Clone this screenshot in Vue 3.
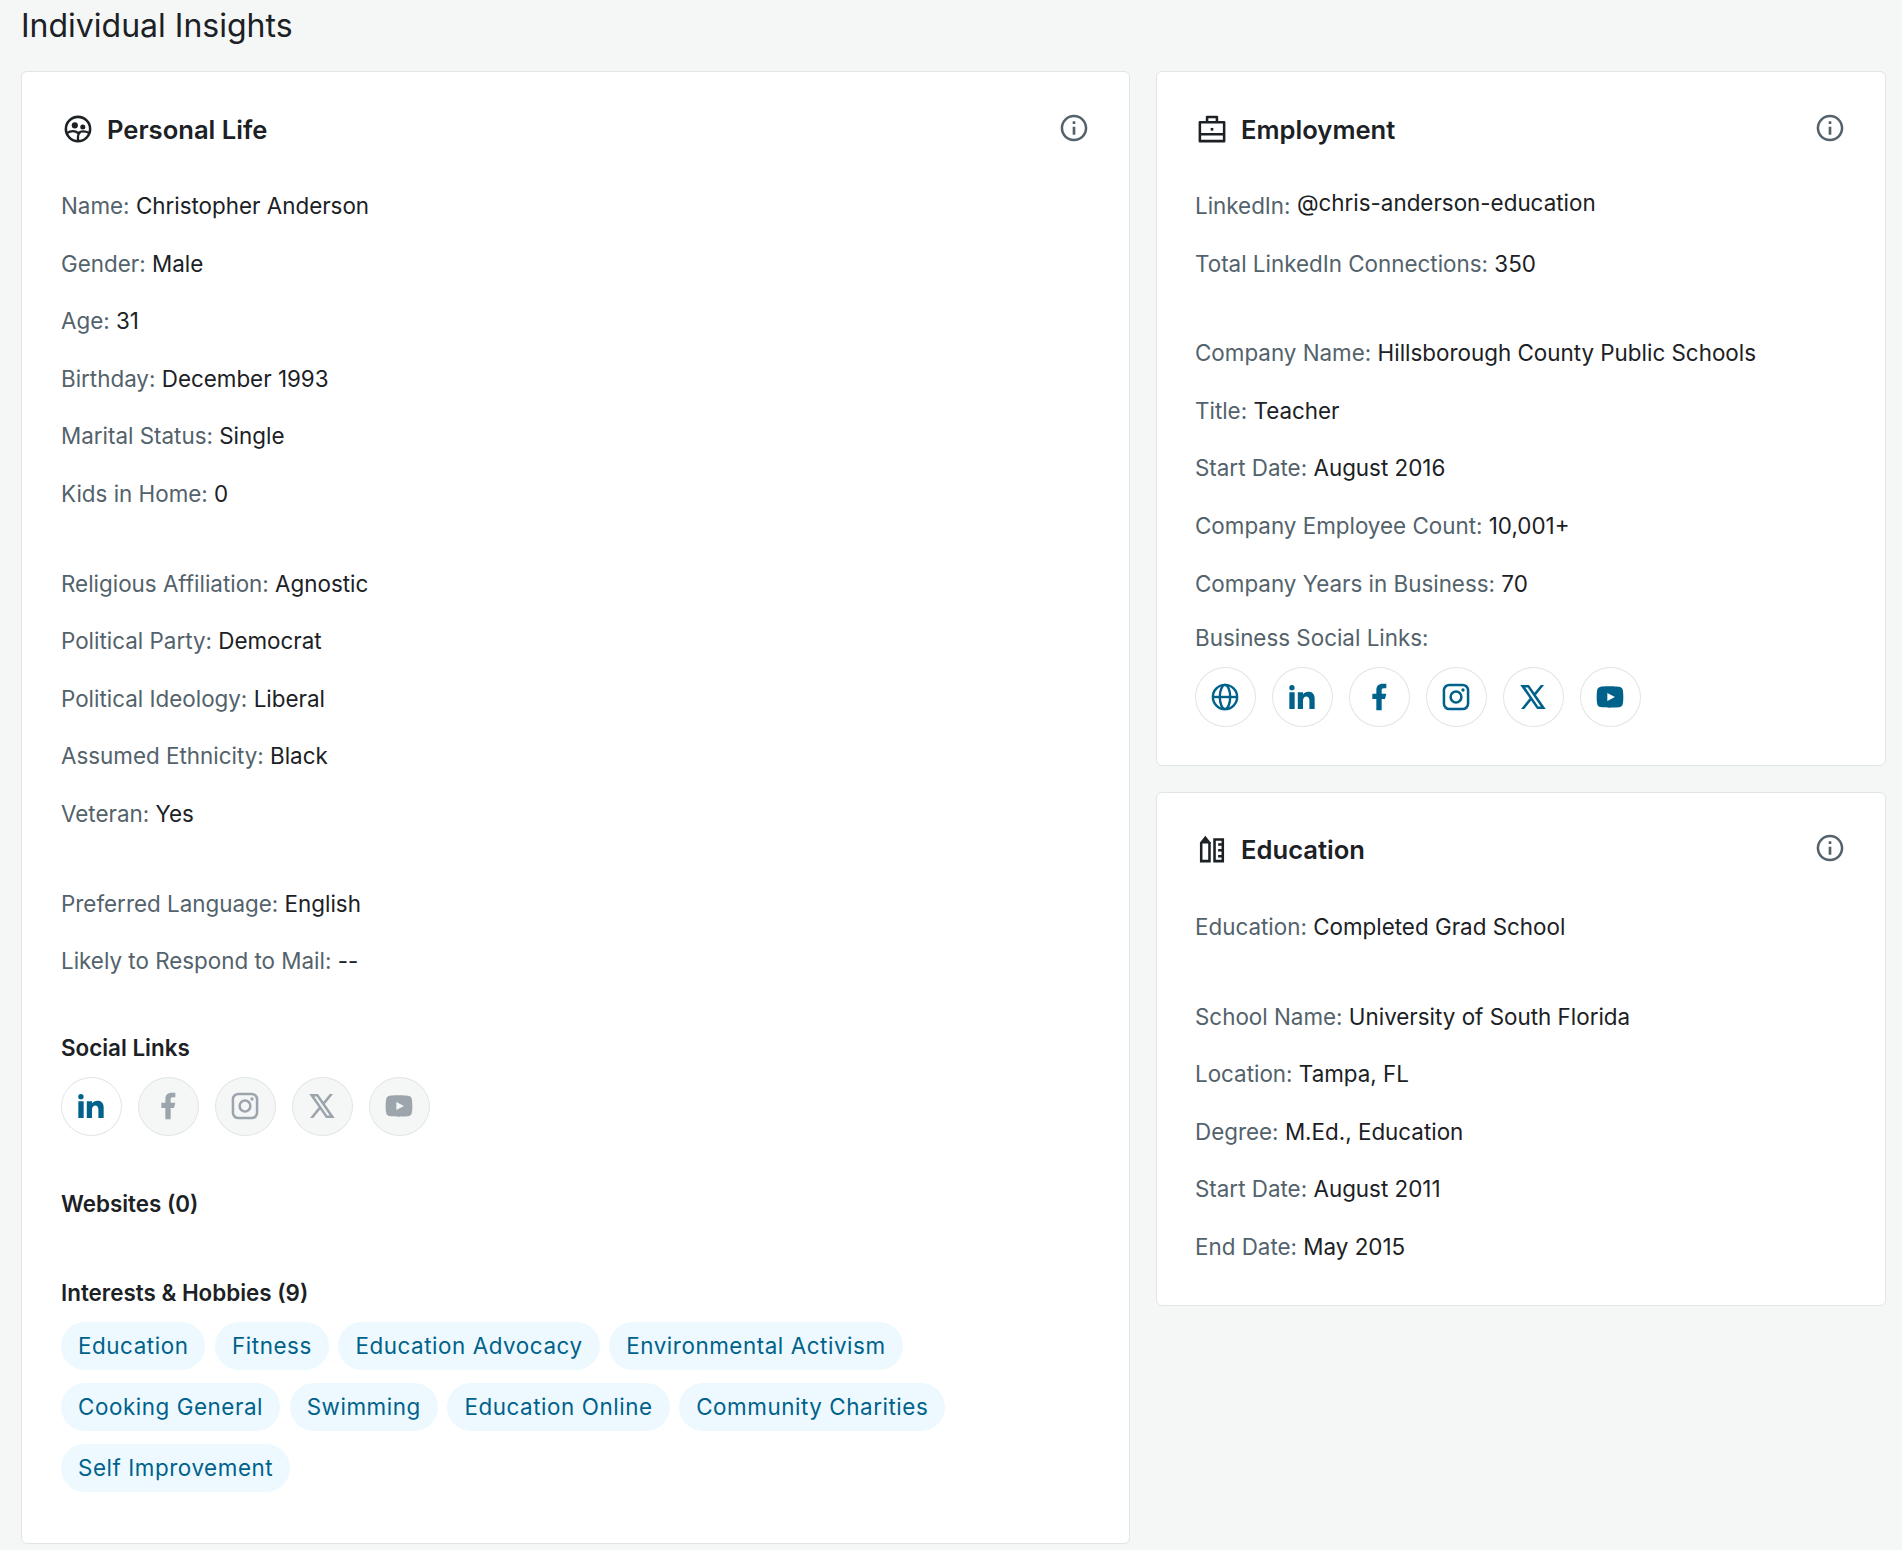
<script setup>
const personalGroups = [
  [
    { label: 'Name', value: 'Christopher Anderson' },
    { label: 'Gender', value: 'Male' },
    { label: 'Age', value: '31' },
    { label: 'Birthday', value: 'December 1993' },
    { label: 'Marital Status', value: 'Single' },
    { label: 'Kids in Home', value: '0' },
  ],
  [
    { label: 'Religious Affiliation', value: 'Agnostic' },
    { label: 'Political Party', value: 'Democrat' },
    { label: 'Political Ideology', value: 'Liberal' },
    { label: 'Assumed Ethnicity', value: 'Black' },
    { label: 'Veteran', value: 'Yes' },
  ],
  [
    { label: 'Preferred Language', value: 'English' },
    { label: 'Likely to Respond to Mail', value: '--' },
  ],
];

const employmentGroups = [
  [
    { label: 'LinkedIn', value: '@chris-anderson-education', link: true },
    { label: 'Total LinkedIn Connections', value: '350' },
  ],
  [
    { label: 'Company Name', value: 'Hillsborough County Public Schools' },
    { label: 'Title', value: 'Teacher' },
    { label: 'Start Date', value: 'August 2016' },
    { label: 'Company Employee Count', value: '10,001+' },
    { label: 'Company Years in Business', value: '70' },
  ],
];

const educationGroups = [
  [{ label: 'Education', value: 'Completed Grad School' }],
  [
    { label: 'School Name', value: 'University of South Florida' },
    { label: 'Location', value: 'Tampa, FL' },
    { label: 'Degree', value: 'M.Ed., Education' },
    { label: 'Start Date', value: 'August 2011' },
    { label: 'End Date', value: 'May 2015' },
  ],
];

const infoIcon =
  'M11 7h2v2h-2zm0 4h2v6h-2zm1-9C6.48 2 2 6.48 2 12s4.48 10 10 10 10-4.48 10-10S17.52 2 12 2zm0 18.1c-4.47 0-8.1-3.63-8.1-8.1S7.53 3.900 12 3.900s8.100 3.630 8.100 8.100-3.630 8.100-8.100 8.100z';

const icons = {
  linkedin:
    'M6.44 5a2 2 0 1 1-4-.002 2 2 0 0 1 4 .002zM6.500 8.480h-4V21h4V8.480zm6.320 0H8.840V21h3.940v-6.570c0-3.660 4.770-4 4.770 0V21h3.950v-7.930c0-6.170-7.060-5.940-8.720-2.910l.04-1.680z',
  facebook:
    'M14 13.5h2.5l1-4H14v-2c0-1.03 0-2 2-2h1.5V2.14c-.326-.043-1.557-.14-2.857-.14C11.928 2 10 3.657 10 6.7v2.8H7v4h3V22h4v-8.5z',
  instagram:
    'M7 2h10a5 5 0 0 1 5 5v10a5 5 0 0 1-5 5H7a5 5 0 0 1-5-5V7a5 5 0 0 1 5-5zm0 1.900A3.100 3.100 0 0 0 3.900 7v10A3.100 3.100 0 0 0 7 20.100h10a3.100 3.100 0 0 0 3.100-3.100V7A3.100 3.100 0 0 0 17 3.900zM12 7a5 5 0 1 1 0 10 5 5 0 0 1 0-10zm0 1.900a3.100 3.100 0 1 0 0 6.200 3.100 3.100 0 0 0 0-6.200zM17.250 5.500a1.250 1.250 0 1 1 0 2.500 1.250 1.250 0 0 1 0-2.500z',
  x: 'M10.600 14.650 15.030 21h6.520l-7.320-10.480L20.320 3h-2.470l-4.770 5.890L8.970 3H2.450l7 10.015L2.980 21h2.470zM15.960 19.200 6.180 4.800h1.860l9.780 14.400z',
  youtube:
    'M12.244 4c.534.003 1.87.016 3.29.073l.504.022c1.429.067 2.857.183 3.566.38.945.266 1.687 1.04 1.938 2.022.4 1.56.45 4.602.456 5.339l.001.152v.174c-.007.737-.057 3.78-.457 5.339-.254.985-.997 1.76-1.938 2.022-.709.197-2.137.313-3.566.38l-.504.023c-1.42.056-2.756.07-3.29.072l-.235.001h-.255c-1.13-.007-5.856-.058-7.36-.476-.944-.266-1.687-1.04-1.938-2.022-.4-1.56-.45-4.602-.456-5.339v-.326c.006-.737.056-3.78.456-5.339.254-.985.997-1.76 1.939-2.021 1.503-.419 6.23-.47 7.36-.476zM10 9v6l5.700-3z',
};

const socialLinks = [
  { name: 'linkedin', active: true },
  { name: 'facebook', active: false },
  { name: 'instagram', active: false },
  { name: 'x', active: false },
  { name: 'youtube', active: false },
];

const businessLinks = ['web', 'linkedin', 'facebook', 'instagram', 'x', 'youtube'];

const interests = [
  'Education',
  'Fitness',
  'Education Advocacy',
  'Environmental Activism',
  'Cooking General',
  'Swimming',
  'Education Online',
  'Community Charities',
  'Self Improvement',
];
</script>

<template>
  <main class="page">
    <h1 class="page-title">Individual Insights</h1>
    <div class="columns">
      <section class="card card-personal">
        <header class="card-header">
          <svg class="icon" viewBox="0 0 24 24" fill="none" stroke="currentColor" stroke-width="1.9">
            <circle cx="12" cy="12" r="9.1" />
            <path d="M3.4 15.2c3.2-1.9 6.1-2.2 8.7-.2 2.4-1.6 5.4-1.5 8.3 0M12 21v-3.5c0-1.4.6-2.2 1.6-2.8" stroke-width="1.7" />
            <circle cx="9.6" cy="9.3" r="2.3" fill="currentColor" stroke="none" />
            <circle cx="15.6" cy="10.5" r="1.9" fill="currentColor" stroke="none" />
          </svg>
          <h2>Personal Life</h2>
          <svg class="icon info" viewBox="0 0 24 24"><path fill="currentColor" :d="infoIcon" /></svg>
        </header>
        <div v-for="(group, i) in personalGroups" :key="i" class="group">
          <p v-for="row in group" :key="row.label" class="row">
            <span class="label">{{ row.label }}:</span> <span>{{ row.value }}</span>
          </p>
        </div>
        <h3 class="section-title social-title">Social Links</h3>
        <div class="socials">
          <a v-for="s in socialLinks" :key="s.name" class="social" :class="{ disabled: !s.active }">
            <svg class="icon" viewBox="0 0 24 24"><path fill="currentColor" fill-rule="evenodd" :d="icons[s.name]" /></svg>
          </a>
        </div>
        <h3 class="section-title websites">Websites (0)</h3>
        <h3 class="section-title">Interests &amp; Hobbies (9)</h3>
        <div class="chips">
          <span v-for="name in interests" :key="name" class="chip">{{ name }}</span>
        </div>
      </section>

      <div class="side">
        <section class="card card-employment">
          <header class="card-header">
            <svg class="icon" viewBox="0 0 24 24" fill="none" stroke="currentColor" stroke-width="1.9">
              <path d="M2.9 6.9h18.2v14.2H2.9zM8.3 6.9V3h7.4v3.900M2.900 15.900h18.200" stroke-linejoin="round" />
              <path d="M11 11.200h2v2h-2z" fill="currentColor" stroke="none" />
            </svg>
            <h2>Employment</h2>
            <svg class="icon info" viewBox="0 0 24 24"><path fill="currentColor" :d="infoIcon" /></svg>
          </header>
          <div v-for="(group, i) in employmentGroups" :key="i" class="group">
            <p v-for="row in group" :key="row.label" class="row">
              <span class="label">{{ row.label }}:</span> <span :class="{ handle: row.link }">{{ row.value }}</span>
            </p>
          </div>
          <p class="business-label">Business Social Links:</p>
          <div class="socials">
            <a v-for="name in businessLinks" :key="name" class="social social-tall">
              <svg v-if="name === 'web'" class="icon" viewBox="0 0 24 24" fill="none" stroke="currentColor" stroke-width="1.8">
                <circle cx="12" cy="12" r="9.1" />
                <ellipse cx="12" cy="12" rx="3.9" ry="9.1" />
                <path d="M3 12h18" />
              </svg>
              <svg v-else class="icon" viewBox="0 0 24 24"><path fill="currentColor" fill-rule="evenodd" :d="icons[name]" /></svg>
            </a>
          </div>
        </section>

        <section class="card card-education">
          <header class="card-header">
            <svg class="icon" viewBox="0 0 24 24" fill="none" stroke="currentColor" stroke-width="1.9">
              <path d="M3.900 7v14.100h6.200V7" />
              <path d="M3 7.200 7 2l4 5.200v.6H3z" fill="currentColor" stroke="none" />
              <path d="M13.900 4.900h6.200v16.200h-6.200zM16.600 8.600H20M16.600 13H20M16.600 17.400H20" />
            </svg>
            <h2>Education</h2>
            <svg class="icon info" viewBox="0 0 24 24"><path fill="currentColor" :d="infoIcon" /></svg>
          </header>
          <div v-for="(group, i) in educationGroups" :key="i" class="group">
            <p v-for="row in group" :key="row.label" class="row">
              <span class="label">{{ row.label }}:</span> <span>{{ row.value }}</span>
            </p>
          </div>
        </section>
      </div>
    </div>
  </main>
</template>

<style>
body {
  margin: 0;
  background: #f5f7f7;
}
</style>

<style scoped>
.page {
  box-sizing: border-box;
  width: 1902px;
  height: 1550px;
  overflow: hidden;
  padding: 0 16px 0 21px;
  background: #f5f7f7;
  color: #1b2124;
  font-family: Inter, sans-serif;
  font-size: 22.4px;
}

h1,
h2,
h3,
p {
  margin: 0;
}

.page-title {
  height: 71px;
  font-size: 32px;
  font-weight: 400;
  line-height: 51px;
}

.columns {
  display: flex;
  justify-content: space-between;
  align-items: flex-start;
}

.card {
  box-sizing: border-box;
  padding: 37px 39px 0;
  background: #fff;
  border: 1px solid #e0e5e5;
  border-radius: 6px;
}

.card-personal {
  width: 1109px;
  height: 1473px;
}

.side {
  display: flex;
  flex-direction: column;
  gap: 26px;
  width: 730px;
}

.side .card {
  padding-left: 38px;
}

.card-employment {
  height: 695px;
}

.side .card-education {
  height: 514px;
  padding-top: 36px;
}

.card-header {
  display: flex;
  align-items: center;
  height: 40px;
  margin-bottom: 28px;
}

.card-education .card-header {
  margin-bottom: 29px;
}

.card-header h2 {
  flex: 1;
  margin-left: 13px;
  font-size: 25.6px;
  font-weight: 600;
}

.icon {
  display: block;
  flex: none;
  width: 32px;
  height: 32px;
}

.card-header .icon:first-child {
  margin-left: 1px;
}

.info {
  margin-top: -3px;
  color: #53626b;
}

.group {
  margin-bottom: 32px;
}

.row {
  height: 57.6px;
  line-height: 57.6px;
  white-space: nowrap;
}

.label,
.business-label {
  color: #53626b;
}

.handle {
  position: relative;
  top: -3px;
}

.section-title {
  font-size: 22.4px;
  font-weight: 600;
  line-height: 32px;
}

.social-title {
  margin-top: 42px;
}

.socials {
  display: flex;
  gap: 16px;
  margin-top: 13px;
}

.social {
  box-sizing: border-box;
  display: flex;
  align-items: center;
  justify-content: center;
  width: 61px;
  height: 59px;
  padding-right: 1px;
  border: 1px solid #e0e5e5;
  border-radius: 50%;
  color: #00628b;
}

.social-tall {
  height: 60px;
}

.disabled {
  background: #f5f7f7;
  color: #9ca5ab;
}

.websites {
  margin: 52px 0 57px;
}

.business-label {
  margin-top: -22px;
  line-height: 32px;
}

.chips {
  display: flex;
  flex-wrap: wrap;
  gap: 13px 9.6px;
  width: 900px;
  margin-top: 13px;
}

.chip {
  padding: 0 17px;
  border-radius: 24px;
  background: #edf9ff;
  color: #00628b;
  line-height: 48px;
  letter-spacing: 0.56px;
}
</style>
